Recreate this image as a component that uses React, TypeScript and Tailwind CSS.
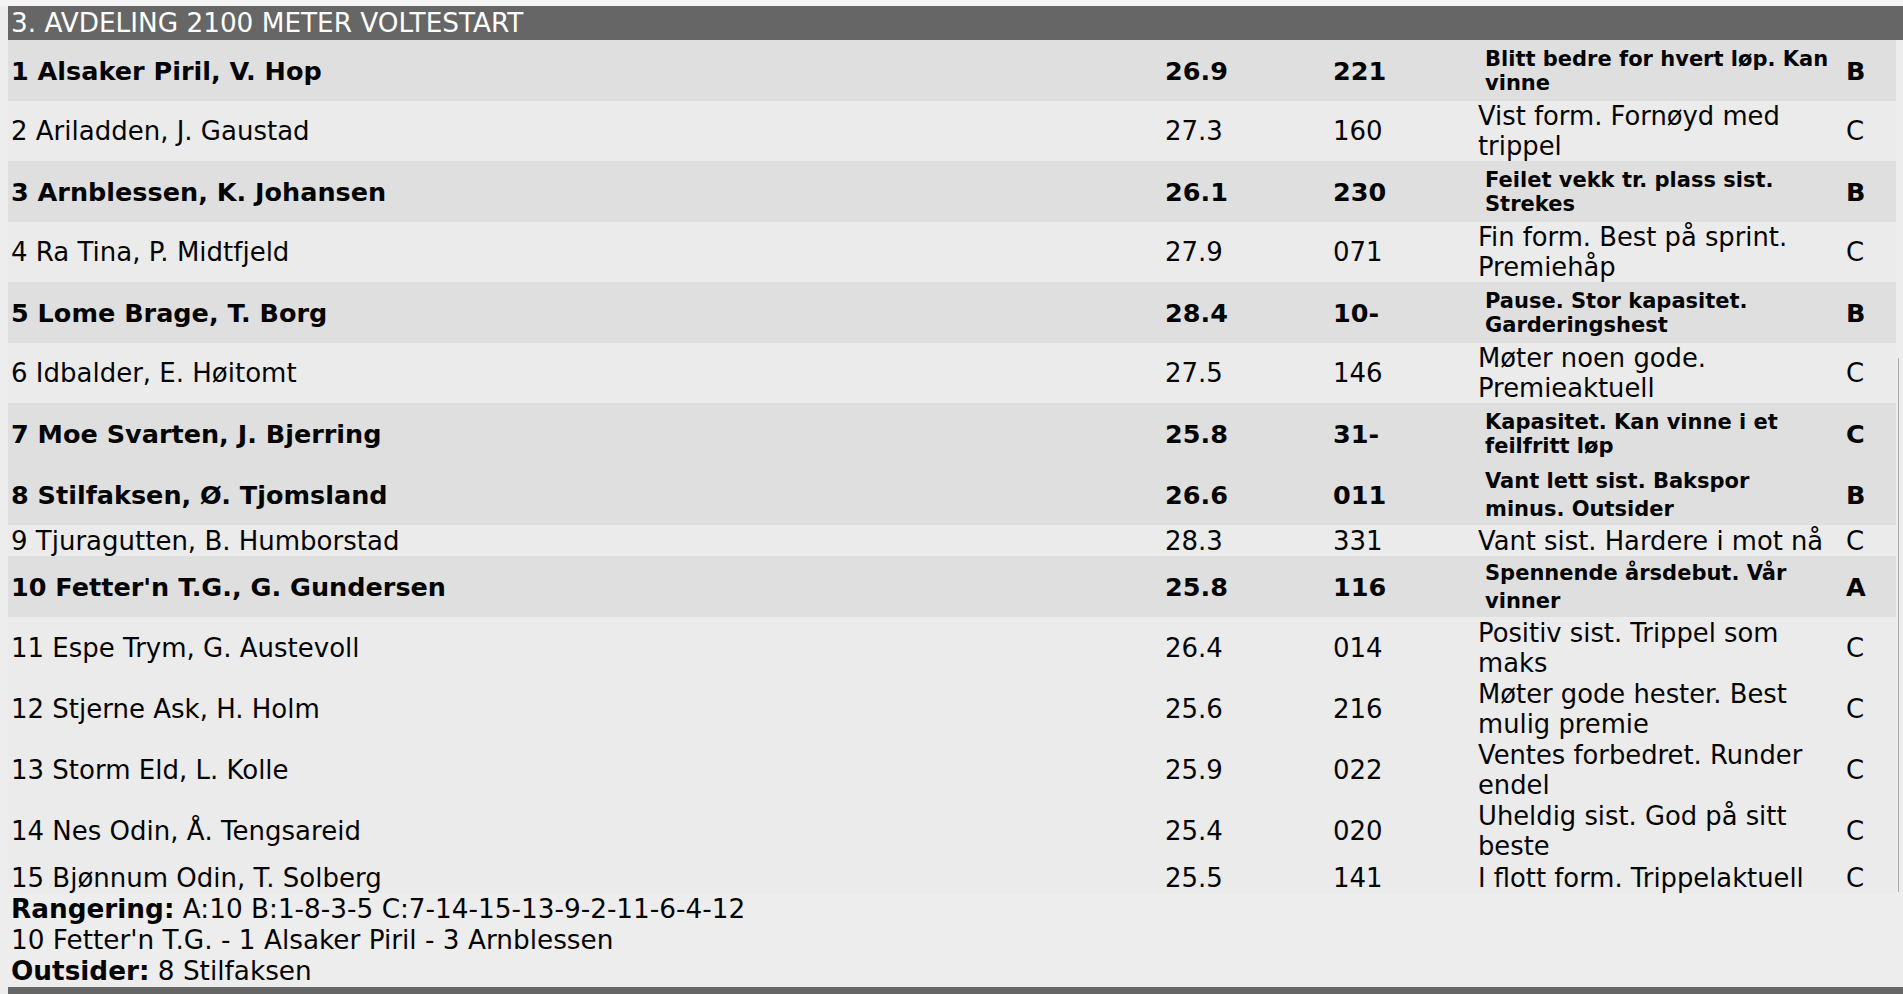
import React from "react";

type Row = {
  name: string;
  time: string;
  num: string;
  comment: string[];
  grade: string;
  bold: boolean;
  h: string;
  big?: boolean;
};

const rows: Row[] = [
  { name: "1 Alsaker Piril, V. Hop", time: "26.9", num: "221", comment: ["Blitt bedre for hvert løp. Kan", "vinne"], grade: "B", bold: true, h: "h-[61px]" },
  { name: "2 Ariladden, J. Gaustad", time: "27.3", num: "160", comment: ["Vist form. Fornøyd med", "trippel"], grade: "C", bold: false, h: "h-[60px]" },
  { name: "3 Arnblessen, K. Johansen", time: "26.1", num: "230", comment: ["Feilet vekk tr. plass sist.", "Strekes"], grade: "B", bold: true, h: "h-[61px]" },
  { name: "4 Ra Tina, P. Midtfjeld", time: "27.9", num: "071", comment: ["Fin form. Best på sprint.", "Premiehåp"], grade: "C", bold: false, h: "h-[60px]" },
  { name: "5 Lome Brage, T. Borg", time: "28.4", num: "10-", comment: ["Pause. Stor kapasitet.", "Garderingshest"], grade: "B", bold: true, h: "h-[61px]" },
  { name: "6 Idbalder, E. Høitomt", time: "27.5", num: "146", comment: ["Møter noen gode.", "Premieaktuell"], grade: "C", bold: false, h: "h-[60px]" },
  { name: "7 Moe Svarten, J. Bjerring", time: "25.8", num: "31-", comment: ["Kapasitet. Kan vinne i et", "feilfritt løp"], grade: "C", bold: true, h: "h-[61px]" },
  { name: "8 Stilfaksen, Ø. Tjomsland", time: "26.6", num: "011", comment: ["Vant lett sist. Bakspor", "minus. Outsider"], grade: "B", bold: true, h: "h-[61px]", big: true },
  { name: "9 Tjuragutten, B. Humborstad", time: "28.3", num: "331", comment: ["Vant sist. Hardere i mot nå"], grade: "C", bold: false, h: "h-[31px]" },
  { name: "10 Fetter'n T.G., G. Gundersen", time: "25.8", num: "116", comment: ["Spennende årsdebut. Vår", "vinner"], grade: "A", bold: true, h: "h-[61px]", big: true },
  { name: "11 Espe Trym, G. Austevoll", time: "26.4", num: "014", comment: ["Positiv sist. Trippel som", "maks"], grade: "C", bold: false, h: "h-[61px]" },
  { name: "12 Stjerne Ask, H. Holm", time: "25.6", num: "216", comment: ["Møter gode hester. Best", "mulig premie"], grade: "C", bold: false, h: "h-[61px]" },
  { name: "13 Storm Eld, L. Kolle", time: "25.9", num: "022", comment: ["Ventes forbedret. Runder", "endel"], grade: "C", bold: false, h: "h-[61px]" },
  { name: "14 Nes Odin, Å. Tengsareid", time: "25.4", num: "020", comment: ["Uheldig sist. God på sitt", "beste"], grade: "C", bold: false, h: "h-[62px]" },
  { name: "15 Bjønnum Odin, T. Solberg", time: "25.5", num: "141", comment: ["I flott form. Trippelaktuell"], grade: "C", bold: false, h: "h-[32px]" },
];

function RaceRow({ r }: { r: Row }) {
  const bg = r.bold ? "bg-[#dfdfdf]" : "bg-[#ebebeb]";
  const cell = r.bold ? "font-bold text-[25.5px]" : "font-normal text-[26px]";
  const commentCls = r.bold
    ? r.big
      ? "pl-[7px] text-[21px] leading-[28px] font-bold"
      : "pl-[7px] text-[21px] leading-[24px] font-bold"
    : "text-[25.8px] leading-[30px] font-normal";
  return (
    <div className={`flex w-[1888px] items-center ${r.h} ${bg}`}>
      <div className={`w-[1157px] shrink-0 whitespace-nowrap pl-[3px] leading-[30px] ${cell}`}>{r.name}</div>
      <div className={`w-[168px] shrink-0 leading-[30px] ${cell}`}>{r.time}</div>
      <div className={`w-[145px] shrink-0 leading-[30px] ${cell}`}>{r.num}</div>
      <div className={`w-[368px] shrink-0 whitespace-nowrap ${commentCls}`}>
        {r.comment.map((line, i) => (
          <div key={i}>{line}</div>
        ))}
      </div>
      <div className={`flex-1 leading-[30px] ${cell}`}>{r.grade}</div>
    </div>
  );
}

export default function App() {
  return (
    <div className="h-[994px] overflow-hidden bg-[#ededed] font-['DejaVu_Sans',sans-serif] text-[#050505]">
      <div className="h-[6px] bg-[#f4f4f4]" />
      <div className="ml-[8px]">
        <div className="h-[34px] whitespace-nowrap bg-[#666666] pl-[3px] text-[26.3px] leading-[34px] text-white">
          3. AVDELING 2100 METER VOLTESTART
        </div>
        <div className="flex">
          <div className="flex flex-col">
            {rows.map((r, i) => (
              <RaceRow key={i} r={r} />
            ))}
          </div>
          <div className="pl-[2px] pt-[318px]">
            <div className="h-[534px] w-[1px] bg-[#a8a8a8]" />
          </div>
        </div>
        <div className="pl-[3px] text-[26.3px] leading-[31px]">
          <div className="whitespace-nowrap">
            <span className="font-bold">Rangering:</span> A:10 B:1-8-3-5 C:7-14-15-13-9-2-11-6-4-12
          </div>
          <div className="whitespace-nowrap">10 Fetter'n T.G. - 1 Alsaker Piril - 3 Arnblessen</div>
          <div className="whitespace-nowrap">
            <span className="font-bold">Outsider:</span> 8 Stilfaksen
          </div>
        </div>
        <div className="h-[8px] bg-[#666666]" />
      </div>
    </div>
  );
}
